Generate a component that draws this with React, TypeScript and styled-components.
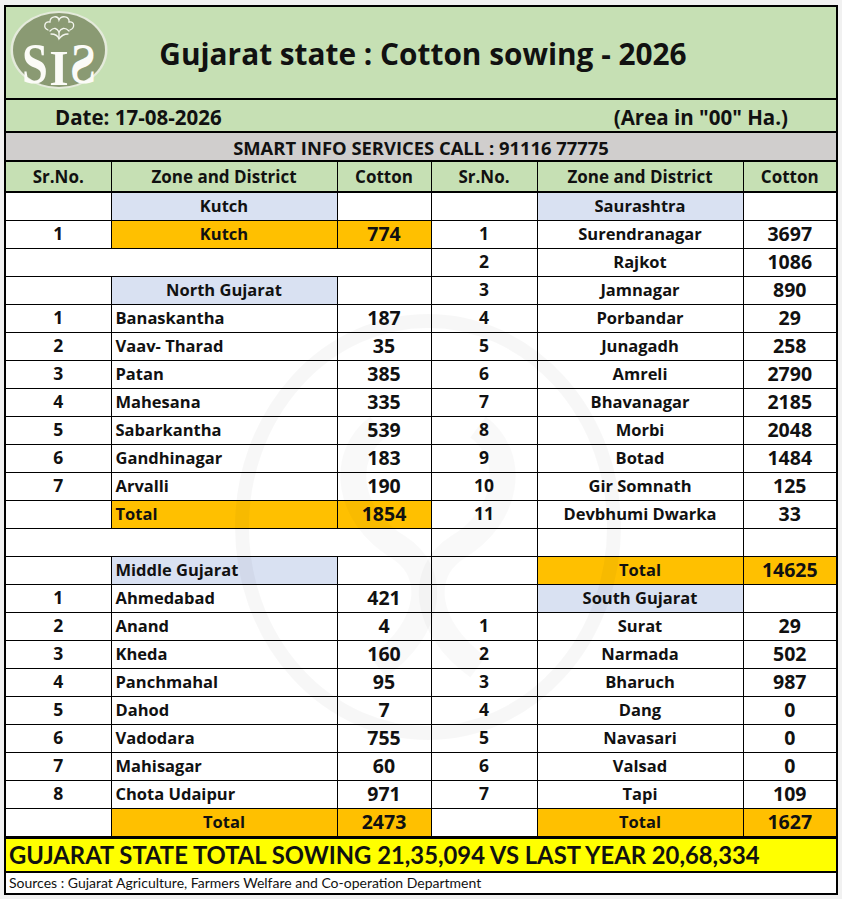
import styled, { createGlobalStyle } from "styled-components";

const GlobalStyle = createGlobalStyle`
  html, body {
    margin: 0;
    padding: 0;
    background: #f1f1f1;
  }
  * {
    box-sizing: border-box;
  }
`;

type Row =
  | { kind: "zone"; name: string; align?: "left" | "center" }
  | { kind: "item"; sr: number; name: string; value: number; align?: "left" | "center"; highlight?: boolean }
  | { kind: "total"; value: number; align?: "left" | "center" }
  | { kind: "blank"; merged?: boolean };

const items = (list: [string, number][], align: "left" | "center"): Row[] =>
  list.map(([name, value], i) => ({ kind: "item", sr: i + 1, name, value, align }));

const leftRows: Row[] = [
  { kind: "zone", name: "Kutch" },
  { kind: "item", sr: 1, name: "Kutch", value: 774, align: "center", highlight: true },
  { kind: "blank", merged: true },
  { kind: "zone", name: "North Gujarat" },
  ...items(
    [
      ["Banaskantha", 187],
      ["Vaav- Tharad", 35],
      ["Patan", 385],
      ["Mahesana", 335],
      ["Sabarkantha", 539],
      ["Gandhinagar", 183],
      ["Arvalli", 190],
    ],
    "left"
  ),
  { kind: "total", value: 1854, align: "left" },
  { kind: "blank", merged: true },
  { kind: "zone", name: "Middle Gujarat", align: "left" },
  ...items(
    [
      ["Ahmedabad", 421],
      ["Anand", 4],
      ["Kheda", 160],
      ["Panchmahal", 95],
      ["Dahod", 7],
      ["Vadodara", 755],
      ["Mahisagar", 60],
      ["Chota Udaipur", 971],
    ],
    "left"
  ),
  { kind: "total", value: 2473 },
];

const rightRows: Row[] = [
  { kind: "zone", name: "Saurashtra" },
  ...items(
    [
      ["Surendranagar", 3697],
      ["Rajkot", 1086],
      ["Jamnagar", 890],
      ["Porbandar", 29],
      ["Junagadh", 258],
      ["Amreli", 2790],
      ["Bhavanagar", 2185],
      ["Morbi", 2048],
      ["Botad", 1484],
      ["Gir Somnath", 125],
      ["Devbhumi Dwarka", 33],
    ],
    "center"
  ),
  { kind: "blank" },
  { kind: "total", value: 14625 },
  { kind: "zone", name: "South Gujarat" },
  ...items(
    [
      ["Surat", 29],
      ["Narmada", 502],
      ["Bharuch", 987],
      ["Dang", 0],
      ["Navasari", 0],
      ["Valsad", 0],
      ["Tapi", 109],
    ],
    "center"
  ),
  { kind: "total", value: 1627 },
];

const renderCells = (row: Row, side: string) => {
  switch (row.kind) {
    case "zone":
      return [
        <Cell key={side + "a"} />,
        <Cell key={side + "b"} $fill="zone" $align={row.align}>
          {row.name}
        </Cell>,
        <Cell key={side + "c"} />,
      ];
    case "item":
      return [
        <Cell key={side + "a"} $num>
          {row.sr}
        </Cell>,
        <Cell key={side + "b"} $align={row.align} $fill={row.highlight ? "total" : undefined}>
          {row.name}
        </Cell>,
        <Cell key={side + "c"} $num $big $fill={row.highlight ? "total" : undefined}>
          {row.value}
        </Cell>,
      ];
    case "total":
      return [
        <Cell key={side + "a"} />,
        <Cell key={side + "b"} $fill="total" $align={row.align}>
          Total
        </Cell>,
        <Cell key={side + "c"} $fill="total" $num $big>
          {row.value}
        </Cell>,
      ];
    default:
      return row.merged
        ? [<Cell key={side + "a"} colSpan={3} />]
        : [<Cell key={side + "a"} />, <Cell key={side + "b"} />, <Cell key={side + "c"} />];
  }
};

const Logo = () => (
  <LogoSvg viewBox="0 0 98 88" width="98" height="88">
    <ellipse cx="49" cy="40" rx="48.5" ry="39" fill="#e4eadb" />
    <ellipse cx="49" cy="40" rx="46" ry="37" fill="#8a9a73" />
    <g fill="none" stroke="#f4f6ef" strokeWidth="1.3" strokeLinecap="round">
      <path d="M38 20 C33 18 34 11 40 12 C40 6 48 5 49 10 C51 5 60 6 59 12 C65 11 65 18 60 20" />
      <path d="M40 21 C44 17 47 18 49 22 C51 18 55 17 59 21" />
      <path d="M49 22 L49 28" />
      <path d="M41 24 C45 24 48 26 49 29 C51 26 54 24 58 24" />
    </g>
    <g fill="#fbfbf7" fontFamily="'Liberation Serif', serif" fontWeight="700">
      <g transform="translate(25 0) scale(0.8 1)">
        <text x="0" y="73" fontSize="58" textAnchor="middle">
          S
        </text>
      </g>
      <text x="49" y="75" fontSize="50" textAnchor="middle">
        I
      </text>
      <g transform="translate(73 0) scale(-0.8 1)">
        <text x="0" y="73" fontSize="58" textAnchor="middle">
          S
        </text>
      </g>
    </g>
  </LogoSvg>
);

const Watermark = () => (
  <WatermarkSvg viewBox="0 0 400 440" width="400" height="440">
    <ellipse cx="200" cy="220" rx="186" ry="206" fill="none" stroke="rgba(0,0,0,0.03)" strokeWidth="14" />
    <path
      d="M150 120 C110 150 120 210 170 240 C210 265 205 320 150 360"
      fill="none"
      stroke="rgba(0,0,0,0.025)"
      strokeWidth="26"
    />
    <path
      d="M250 120 C290 150 280 210 230 240 C190 265 195 320 250 360"
      fill="none"
      stroke="rgba(0,0,0,0.025)"
      strokeWidth="26"
    />
  </WatermarkSvg>
);

const App = () => {
  return (
    <>
      <GlobalStyle />
      <Frame>
        <TitleBar>
          <Logo />
          <Title>Gujarat state : Cotton sowing - 2026</Title>
          <span />
        </TitleBar>

        <DateBar>
          <span>Date: 17-08-2026</span>
          <span>(Area in "00" Ha.)</span>
        </DateBar>

        <CallBar>SMART INFO SERVICES CALL : 91116 77775</CallBar>

        <Sheet>
          <colgroup>
            <col style={{ width: 105 }} />
            <col style={{ width: 226 }} />
            <col style={{ width: 94 }} />
            <col style={{ width: 106 }} />
            <col style={{ width: 206 }} />
            <col style={{ width: 93 }} />
          </colgroup>
          <thead>
            <HeadRow>
              <HeadCell>Sr.No.</HeadCell>
              <HeadCell>Zone and District</HeadCell>
              <HeadCell>Cotton</HeadCell>
              <HeadCell>Sr.No.</HeadCell>
              <HeadCell>Zone and District</HeadCell>
              <HeadCell>Cotton</HeadCell>
            </HeadRow>
          </thead>
          <tbody>
            {leftRows.map((row, i) => (
              <BodyRow key={i}>
                {renderCells(row, "l")}
                {renderCells(rightRows[i], "r")}
              </BodyRow>
            ))}
          </tbody>
        </Sheet>

        <Banner>GUJARAT STATE TOTAL SOWING 21,35,094 VS LAST YEAR 20,68,334</Banner>
        <Sources>Sources : Gujarat Agriculture, Farmers Welfare and Co-operation Department</Sources>

        <Watermark />
      </Frame>
    </>
  );
};

export default App;

const Frame = styled.main`
  position: relative;
  width: 834px;
  margin: 5px 0 0 4px;
  border: 2px solid #000;
  background: #fff;
  font-family: "Open Sans", Lato, sans-serif;
  font-weight: 700;
  color: #111;
`;

const TitleBar = styled.header`
  display: grid;
  grid-template-columns: 1fr auto 1fr;
  align-items: center;
  height: 93px;
  padding-left: 4px;
  background: #c6e0b4;
  border-bottom: 2px solid #000;
`;

const LogoSvg = styled.svg`
  display: block;
  align-self: start;
  margin-top: 3px;
`;

const Title = styled.h1`
  margin: 0;
  font-size: 29.8px;
  font-weight: 700;
  padding-top: 2px;
`;

const DateBar = styled.div`
  display: flex;
  justify-content: space-between;
  align-items: center;
  height: 33px;
  padding: 2px 48px 0 49px;
  background: #c6e0b4;
  border-bottom: 2px solid #000;
  font-size: 20.5px;
`;

const CallBar = styled.div`
  display: flex;
  justify-content: center;
  align-items: center;
  height: 29px;
  padding-top: 1px;
  background: #d0cecd;
  border-bottom: 2px solid #000;
  font-size: 18.4px;
`;

const Sheet = styled.table`
  width: 100%;
  border-collapse: collapse;
  table-layout: fixed;
`;

const HeadRow = styled.tr`
  height: 30px;
  background: #c6e0b4;
  border-bottom: 2px solid #000;
`;

const HeadCell = styled.th`
  padding: 0;
  border-left: 1px solid #000;
  font-size: 17px;
  font-weight: 700;
  text-align: center;

  &:first-child {
    border-left: 0;
  }
`;

const BodyRow = styled.tr`
  height: 28px;
`;

const Cell = styled.td<{
  $fill?: "zone" | "total";
  $align?: "left" | "center";
  $num?: boolean;
  $big?: boolean;
}>`
  padding: 0 4px;
  border: 1px solid #000;
  border-top: 0;
  background: ${(p) => (p.$fill === "zone" ? "#d9e1f2" : p.$fill === "total" ? "#ffc000" : "transparent")};
  text-align: ${(p) => (p.$num ? "center" : p.$align ?? "center")};
  font-size: ${(p) => (p.$big ? "19.5px" : p.$num ? "17.5px" : "16.5px")};
  line-height: 1;
  white-space: nowrap;

  &:first-child {
    border-left: 0;
  }
  &:last-child {
    border-right: 0;
  }
`;

const Banner = styled.div`
  display: flex;
  align-items: center;
  height: 36px;
  padding: 0 0 0 3px;
  background: #ffff00;
  border-top: 2px solid #000;
  border-bottom: 2px solid #000;
  font-family: Lato, "Open Sans", sans-serif;
  font-size: 23.8px;
`;

const Sources = styled.div`
  display: flex;
  align-items: center;
  height: 20px;
  padding-left: 3px;
  font-family: Lato, "Open Sans", sans-serif;
  font-size: 14px;
  font-weight: 400;
`;

const WatermarkSvg = styled.svg`
  position: absolute;
  left: 222px;
  top: 300px;
  pointer-events: none;
`;
